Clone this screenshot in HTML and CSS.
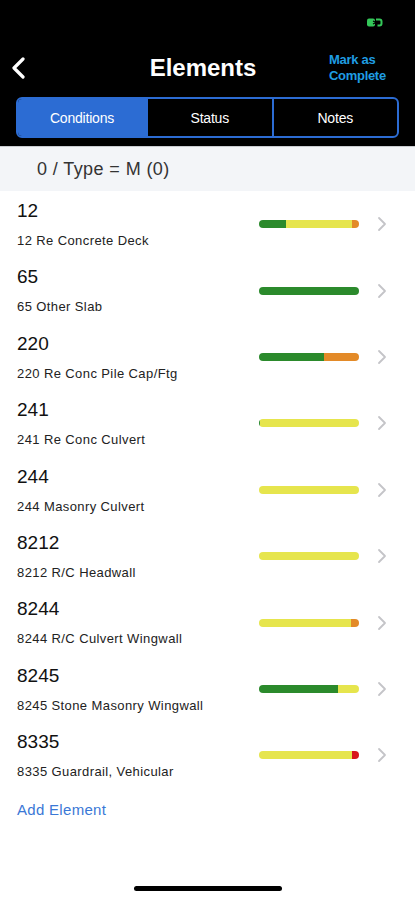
FILE: index.html
```html
<!DOCTYPE html>
<html>
<head>
<meta charset="utf-8">
<link rel="stylesheet" href="styles.css">
</head>
<body>
<div class="page">
  <div class="header">
    <div class="status">
      <svg class="battery" width="17" height="9" viewBox="0 0 17 9">
        <rect x="0" y="0.5" width="8" height="8" rx="2" fill="#34c759"/>
        <path d="M9 1.5 h3.5 a2 2 0 0 1 2 2 v2 a2 2 0 0 1 -2 2 h-2" fill="none" stroke="#34c759" stroke-width="2"/>
        <path d="M6 3 l3 1.5 l-3 1.5" fill="none" stroke="#000" stroke-width="1.2"/>
      </svg>
    </div>
    <div class="nav">
      <svg class="back" width="16" height="22" viewBox="0 0 16 22">
        <path d="M12 2 L3 11 L12 20" fill="none" stroke="#fff" stroke-width="3.2" stroke-linecap="round" stroke-linejoin="round"/>
      </svg>
      <div class="title">Elements</div>
      <div class="mark">Mark as<br>Complete</div>
    </div>
    <div class="seg">
      <div class="seg-item active">Conditions</div>
      <div class="seg-item">Status</div>
      <div class="seg-item">Notes</div>
    </div>
  </div>
  <div class="filter">0 / Type = M (0)</div>
  <div class="list">
    <div class="row">
      <div class="text"><div class="num">12</div><div class="sub">12 Re Concrete Deck</div></div>
      <div class="bar"><span class="g" style="width:27%"></span><span class="y" style="width:66%"></span><span class="o" style="width:7%"></span></div>
      <svg class="chev" width="10" height="16" viewBox="0 0 10 16"><path d="M2 2 L8 8 L2 14" fill="none" stroke="#c4c4c8" stroke-width="1.8" stroke-linecap="round" stroke-linejoin="round"/></svg>
    </div>
    <div class="row">
      <div class="text"><div class="num">65</div><div class="sub">65 Other Slab</div></div>
      <div class="bar"><span class="g" style="width:100%"></span></div>
      <svg class="chev" width="10" height="16" viewBox="0 0 10 16"><path d="M2 2 L8 8 L2 14" fill="none" stroke="#c4c4c8" stroke-width="1.8" stroke-linecap="round" stroke-linejoin="round"/></svg>
    </div>
    <div class="row">
      <div class="text"><div class="num">220</div><div class="sub">220 Re Conc Pile Cap/Ftg</div></div>
      <div class="bar"><span class="g" style="width:65%"></span><span class="o" style="width:35%"></span></div>
      <svg class="chev" width="10" height="16" viewBox="0 0 10 16"><path d="M2 2 L8 8 L2 14" fill="none" stroke="#c4c4c8" stroke-width="1.8" stroke-linecap="round" stroke-linejoin="round"/></svg>
    </div>
    <div class="row">
      <div class="text"><div class="num">241</div><div class="sub">241 Re Conc Culvert</div></div>
      <div class="bar"><span class="g" style="width:1%"></span><span class="y" style="width:99%"></span></div>
      <svg class="chev" width="10" height="16" viewBox="0 0 10 16"><path d="M2 2 L8 8 L2 14" fill="none" stroke="#c4c4c8" stroke-width="1.8" stroke-linecap="round" stroke-linejoin="round"/></svg>
    </div>
    <div class="row">
      <div class="text"><div class="num">244</div><div class="sub">244 Masonry Culvert</div></div>
      <div class="bar"><span class="y" style="width:100%"></span></div>
      <svg class="chev" width="10" height="16" viewBox="0 0 10 16"><path d="M2 2 L8 8 L2 14" fill="none" stroke="#c4c4c8" stroke-width="1.8" stroke-linecap="round" stroke-linejoin="round"/></svg>
    </div>
    <div class="row">
      <div class="text"><div class="num">8212</div><div class="sub">8212 R/C Headwall</div></div>
      <div class="bar"><span class="y" style="width:100%"></span></div>
      <svg class="chev" width="10" height="16" viewBox="0 0 10 16"><path d="M2 2 L8 8 L2 14" fill="none" stroke="#c4c4c8" stroke-width="1.8" stroke-linecap="round" stroke-linejoin="round"/></svg>
    </div>
    <div class="row">
      <div class="text"><div class="num">8244</div><div class="sub">8244 R/C Culvert Wingwall</div></div>
      <div class="bar"><span class="y" style="width:92%"></span><span class="o" style="width:8%"></span></div>
      <svg class="chev" width="10" height="16" viewBox="0 0 10 16"><path d="M2 2 L8 8 L2 14" fill="none" stroke="#c4c4c8" stroke-width="1.8" stroke-linecap="round" stroke-linejoin="round"/></svg>
    </div>
    <div class="row">
      <div class="text"><div class="num">8245</div><div class="sub">8245 Stone Masonry Wingwall</div></div>
      <div class="bar"><span class="g" style="width:79%"></span><span class="y" style="width:21%"></span></div>
      <svg class="chev" width="10" height="16" viewBox="0 0 10 16"><path d="M2 2 L8 8 L2 14" fill="none" stroke="#c4c4c8" stroke-width="1.8" stroke-linecap="round" stroke-linejoin="round"/></svg>
    </div>
    <div class="row">
      <div class="text"><div class="num">8335</div><div class="sub">8335 Guardrail, Vehicular</div></div>
      <div class="bar"><span class="y" style="width:93%"></span><span class="r" style="width:7%"></span></div>
      <svg class="chev" width="10" height="16" viewBox="0 0 10 16"><path d="M2 2 L8 8 L2 14" fill="none" stroke="#c4c4c8" stroke-width="1.8" stroke-linecap="round" stroke-linejoin="round"/></svg>
    </div>
  </div>
  <div class="add">Add Element</div>
  <div class="home"></div>
</div>
</body>
</html>
```

FILE: styles.css
```css
* { box-sizing: border-box; }
body {
  margin: 0;
  background: #fff;
  font-family: "Liberation Sans", Arial, sans-serif;
}
.page {
  width: 415px;
  height: 900px;
  display: flex;
  flex-direction: column;
  overflow: hidden;
}
.header {
  background: #000;
  padding-bottom: 8px;
}
.status {
  height: 45px;
  display: flex;
  justify-content: flex-end;
  padding: 18px 31px 0 0;
}
.battery { display: block; }
.nav {
  height: 45px;
  display: flex;
  align-items: center;
  padding: 0 0 0 11px;
}
.back { display: block; margin-top: 1px; }
.title {
  flex: 1;
  text-align: center;
  color: #fff;
  font-weight: bold;
  font-size: 24px;
  padding-left: 50px;
  margin-top: 1px;
}
.mark {
  width: 86px;
  color: #1f9de3;
  font-size: 13px;
  font-weight: bold;
  line-height: 16px;
  letter-spacing: -0.3px;
  margin-top: 0;
}
.seg {
  margin: 7px 16px 0 16px;
  height: 41px;
  display: flex;
  border: 2px solid #2c6cd3;
  border-radius: 6px;
  overflow: hidden;
}
.seg-item {
  flex: 1;
  display: flex;
  align-items: center;
  justify-content: center;
  color: #fff;
  font-size: 14px;
  letter-spacing: -0.2px;
}
.seg-item + .seg-item { border-left: 2px solid #2c6cd3; }
.seg-item.active { background: #2c6cd3; flex: 0 0 128px; }
.filter {
  height: 45px;
  background: #f3f5f8;
  border-top: 1px solid #c9ccd0;
  padding-left: 37px;
  display: flex;
  align-items: center;
  font-size: 18px;
  letter-spacing: 0.4px;
  color: #333;
}
.list { display: flex; flex-direction: column; }
.row {
  height: 66.4px;
  display: flex;
  align-items: center;
  padding-left: 17px;
}
.text {
  flex: 1;
  align-self: flex-start;
  padding-top: 8px;
}
.num {
  font-size: 19px;
  line-height: 24px;
  color: #111;
}
.sub {
  margin-top: 9px;
  font-size: 13px;
  line-height: 18px;
  color: #222;
  letter-spacing: 0.4px;
}
.bar {
  width: 100px;
  height: 8px;
  border-radius: 4px;
  overflow: hidden;
  display: flex;
  margin-right: 18px;
}
.bar span { height: 100%; display: block; }
.g { background: #2b8a2c; }
.y { background: #e6e54d; }
.o { background: #e38a28; }
.r { background: #d8161b; }
.chev { display: block; margin-right: 28px; }
.add {
  padding: 12px 0 0 17px;
  font-size: 15px;
  line-height: 18px;
  letter-spacing: 0.3px;
  color: #3a78d6;
}
.home {
  margin: auto auto 9px auto;
  width: 148px;
  height: 5px;
  border-radius: 3px;
  background: #000;
}
```
